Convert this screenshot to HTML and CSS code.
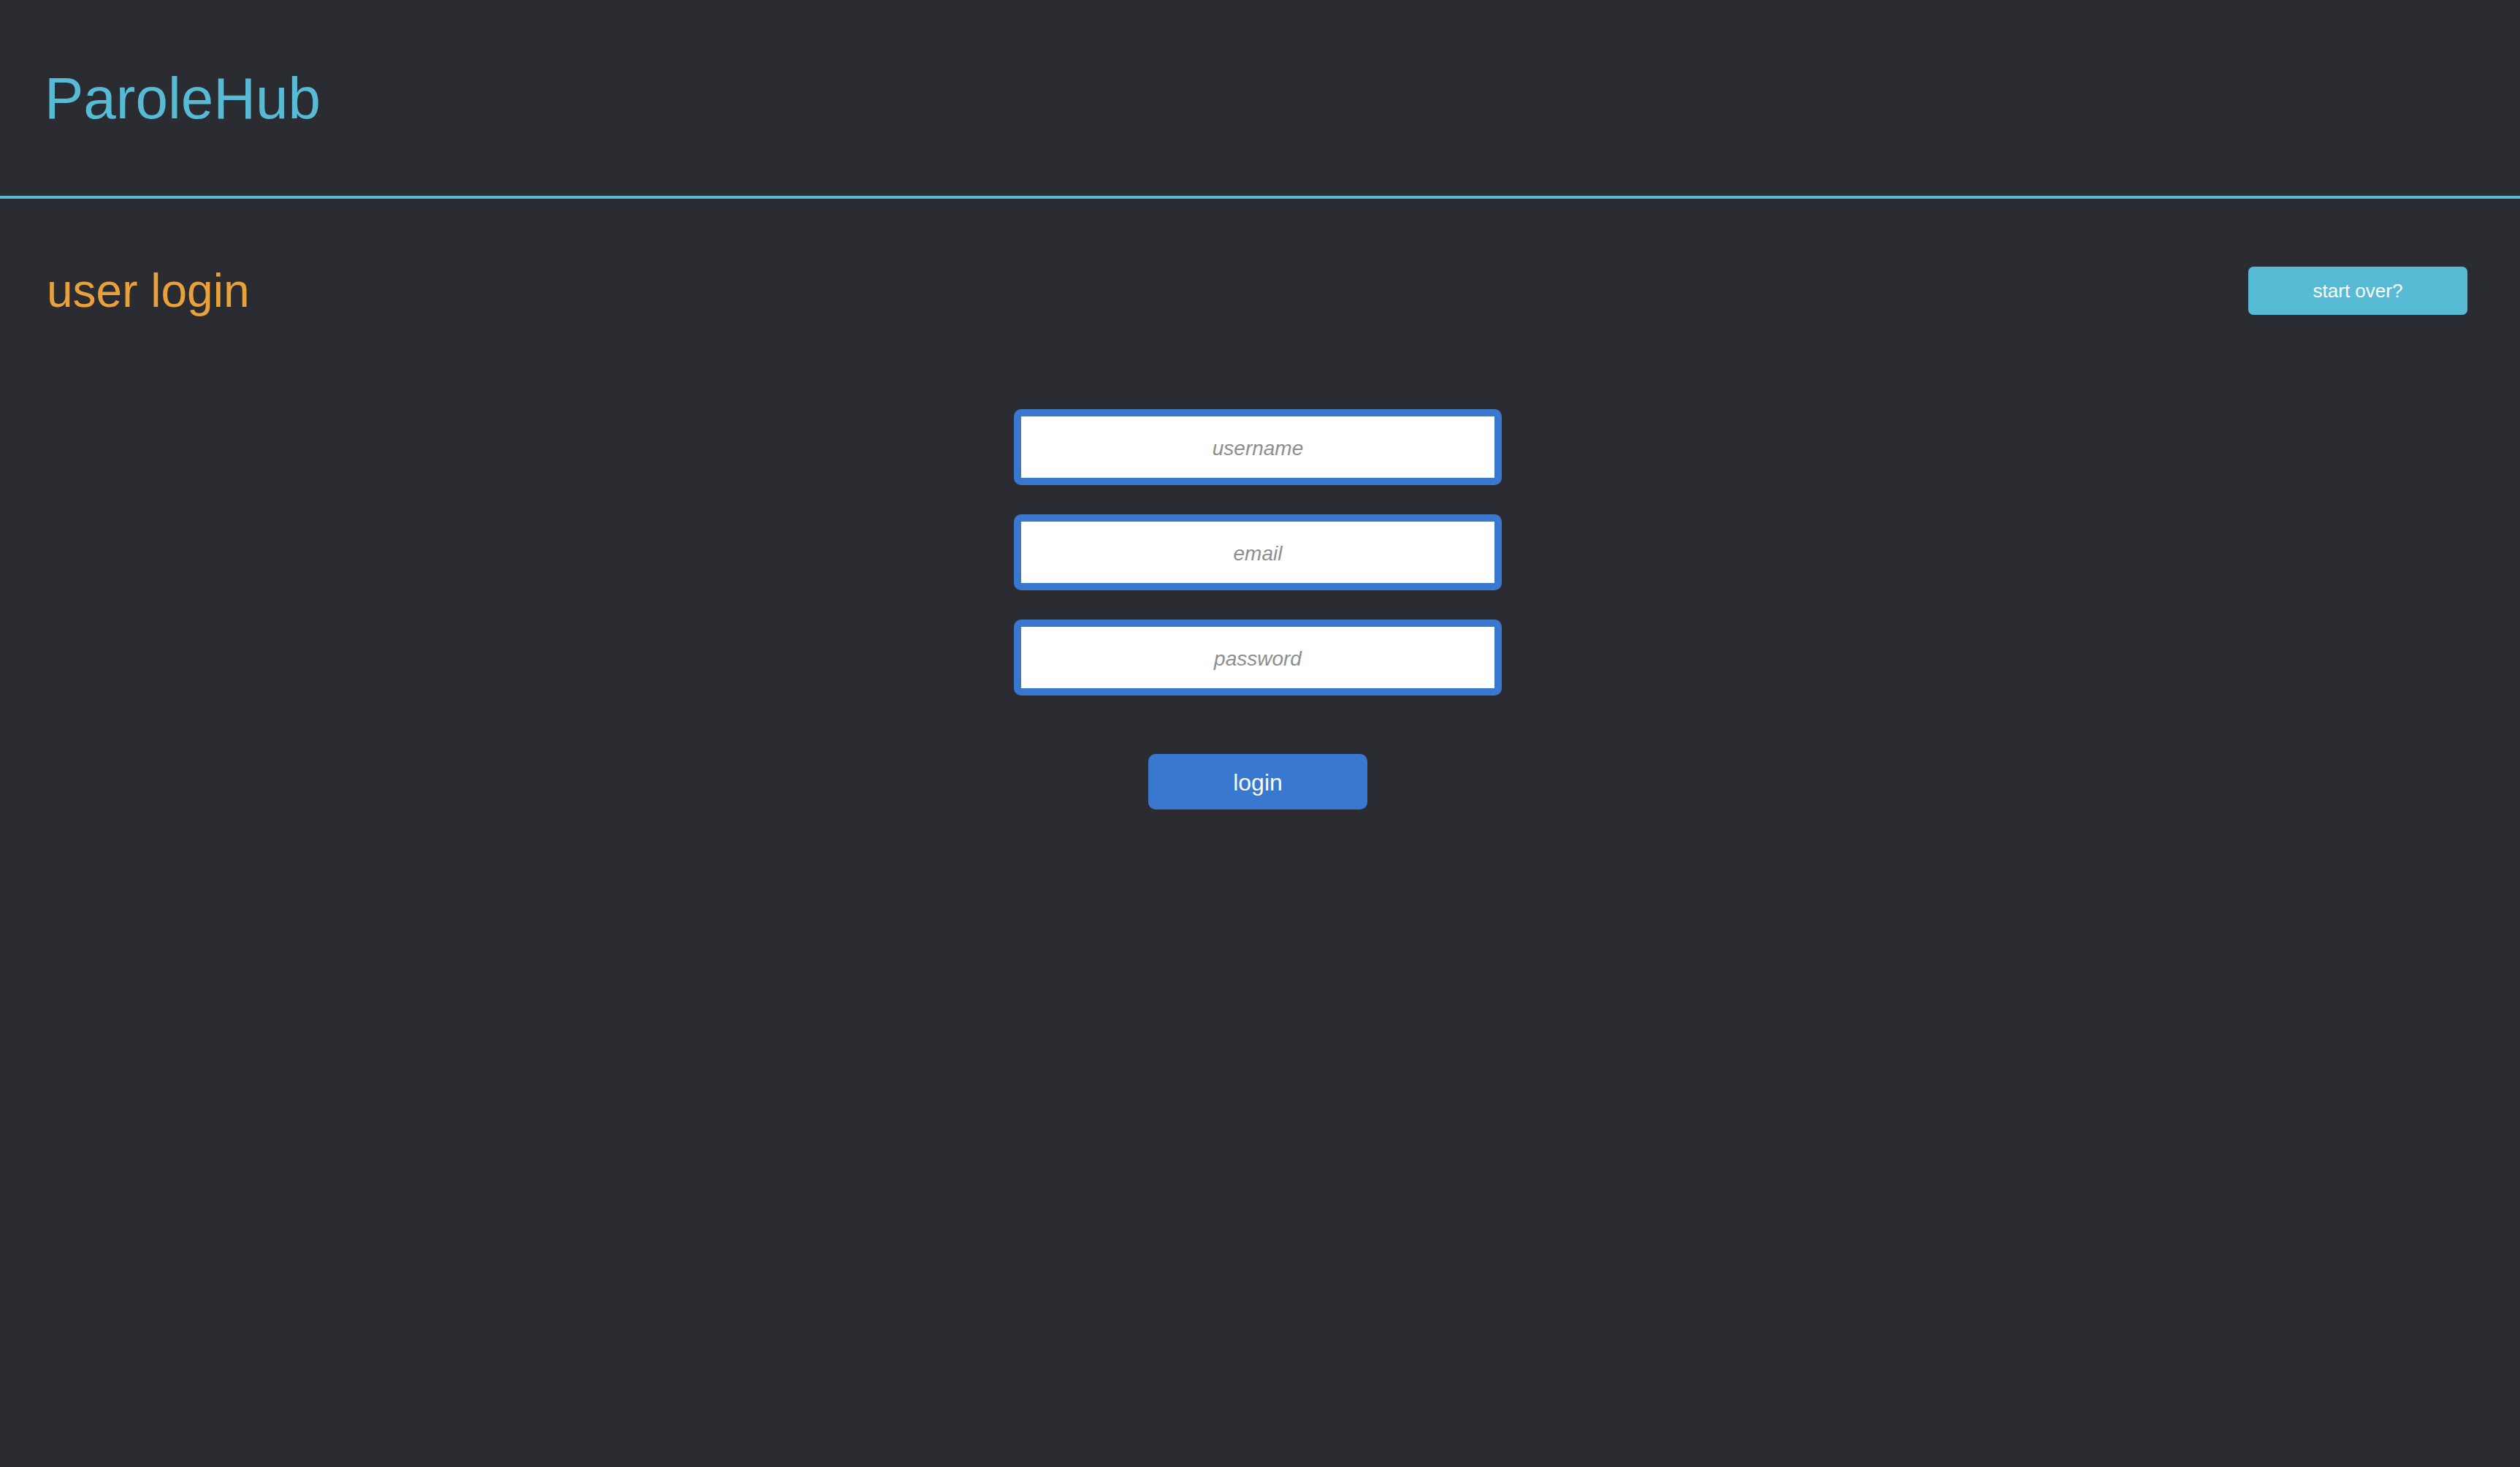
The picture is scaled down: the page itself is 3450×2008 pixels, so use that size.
FILE: index.html
```html
<!DOCTYPE html>
<html lang="en">
<head>
<meta charset="utf-8">
<title>ParoleHub - user login</title>
<link rel="stylesheet" href="styles.css">
</head>
<body>
<header class="site-header">
  <div class="logo">ParoleHub</div>
</header>
<main class="page">
  <div class="title-row">
    <h1 class="page-title">user login</h1>
    <button class="btn-start-over" type="button">start over?</button>
  </div>
  <form class="login-form" onsubmit="return false;">
    <input class="field" type="text" placeholder="username">
    <input class="field" type="email" placeholder="email">
    <input class="field" type="password" placeholder="password">
    <button class="btn-login" type="submit">login</button>
  </form>
</main>
</body>
</html>
```

FILE: styles.css
```css
* {
  box-sizing: border-box;
}

html, body {
  margin: 0;
  padding: 0;
}

body {
  background: #2b2c31;
  font-family: "Liberation Sans", Arial, Helvetica, sans-serif;
  min-height: 2008px;
}

.site-header {
  height: 272px;
  padding: 95px 0 0 61px;
  border-bottom: 4px solid #57bbd5;
}

.logo {
  font-size: 80px;
  line-height: 80px;
  color: #57bbd5;
}

.title-row {
  display: flex;
  justify-content: space-between;
  align-items: center;
  margin-top: 93px;
  padding: 0 72px 0 64px;
}

.page-title {
  margin: 0;
  font-size: 64px;
  line-height: 65px;
  font-weight: normal;
  color: #e9a23b;
}

.btn-start-over {
  width: 300px;
  height: 66px;
  border: none;
  border-radius: 7px;
  background: #57bbd5;
  color: #ffffff;
  font-family: "Liberation Sans", Arial, sans-serif;
  font-size: 26px;
  padding: 0;
}

.login-form {
  display: flex;
  flex-direction: column;
  align-items: center;
  gap: 40px;
  margin-top: 129px;
  padding-right: 6px;
}

.field {
  width: 668px;
  height: 104px;
  border: 10px solid #3a77cf;
  border-radius: 10px;
  background: #ffffff;
  text-align: center;
  font-family: "Liberation Sans", Arial, sans-serif;
  font-size: 28px;
  color: #333;
  outline: none;
  padding: 4px 0 0 0;
}

.field::placeholder {
  color: #8e8e8e;
  font-style: italic;
}

.btn-login {
  margin-top: 40px;
  width: 300px;
  height: 76px;
  border: none;
  border-radius: 10px;
  background: #3a77cf;
  color: #ffffff;
  font-family: "Liberation Sans", Arial, sans-serif;
  font-size: 32px;
  padding: 2px 0 0 0;
}
```
